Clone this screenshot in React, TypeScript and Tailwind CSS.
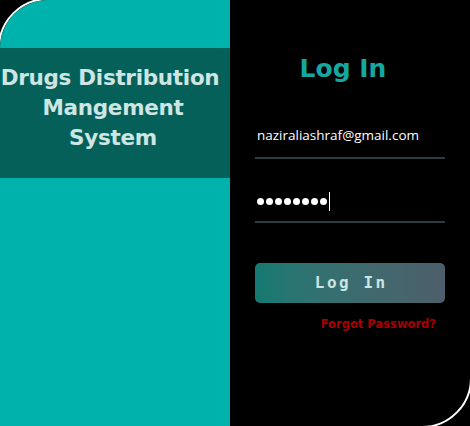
import React from "react";

export default function App() {
  return (
    <div className="w-[470px] h-[426px] bg-black overflow-hidden relative">
      <div className="-mt-[2px] -ml-[2px] flex w-[474px] h-[430px] border-2 border-white rounded-tl-[50px] rounded-br-[50px] overflow-hidden bg-black">
        <div className="w-[230px] shrink-0 bg-[#00b2ac] flex flex-col">
          <div className="mt-[48px] h-[130px] bg-[#056059] pt-[15px] pr-[4px] text-center text-[#cde6e3] font-bold text-[21.5px] leading-[30px] tracking-[-0.3px]" style={{ fontFamily: "Tahoma, 'DejaVu Sans', Verdana, sans-serif" }}>
            <div className="whitespace-nowrap -ml-[6px]">Drugs Distribution</div>
            <div>Mangement</div>
            <div>System</div>
          </div>
        </div>
        <div className="flex-1 flex flex-col pl-[25px] pr-[25px]">
          <div className="mt-[52px] text-center pr-[14px] text-[#16a7a0] font-bold text-[25px] leading-[34px]" style={{ fontFamily: "Tahoma, 'DejaVu Sans', Verdana, sans-serif" }}>
            Log In
          </div>
          <div className="mt-[40px] border-b-2 border-[#2c3a44] pb-[13px] pl-[2px] text-white text-[13.5px] leading-[18px]" style={{ fontFamily: "'Open Sans', 'Liberation Sans', Arial, sans-serif" }}>
            naziraliashraf@gmail.com
          </div>
          <div className="mt-[31px] border-b-2 border-[#2c3a44] pb-[9px] pl-[2px] flex items-center h-[33px]">
            <div className="flex items-center gap-[2px]">
              <span className="w-[7px] h-[7px] rounded-full bg-white" />
              <span className="w-[7px] h-[7px] rounded-full bg-white" />
              <span className="w-[7px] h-[7px] rounded-full bg-white" />
              <span className="w-[7px] h-[7px] rounded-full bg-white" />
              <span className="w-[7px] h-[7px] rounded-full bg-white" />
              <span className="w-[7px] h-[7px] rounded-full bg-white" />
              <span className="w-[7px] h-[7px] rounded-full bg-white" />
              <span className="w-[7px] h-[7px] rounded-full bg-white" />
            </div>
            <span className="ml-[2px] w-[1px] h-[19px] bg-white" />
          </div>
          <div className="mt-[40px] h-[40px] rounded-[5px] bg-gradient-to-r from-[#127a72] to-[#4d5e6b] flex items-center justify-center text-[#c8e6e3] font-bold text-[16px] tracking-[2.5px] pl-[2.5px]" style={{ fontFamily: "'DejaVu Sans Mono', monospace" }}>
            Log In
          </div>
          <div className="mt-[14px] text-right pr-[9px] text-[#a80000] font-bold text-[11.5px] leading-[14px]" style={{ fontFamily: "Tahoma, 'DejaVu Sans', Verdana, sans-serif" }}>
            Forgot Password?
          </div>
        </div>
      </div>
    </div>
  );
}
